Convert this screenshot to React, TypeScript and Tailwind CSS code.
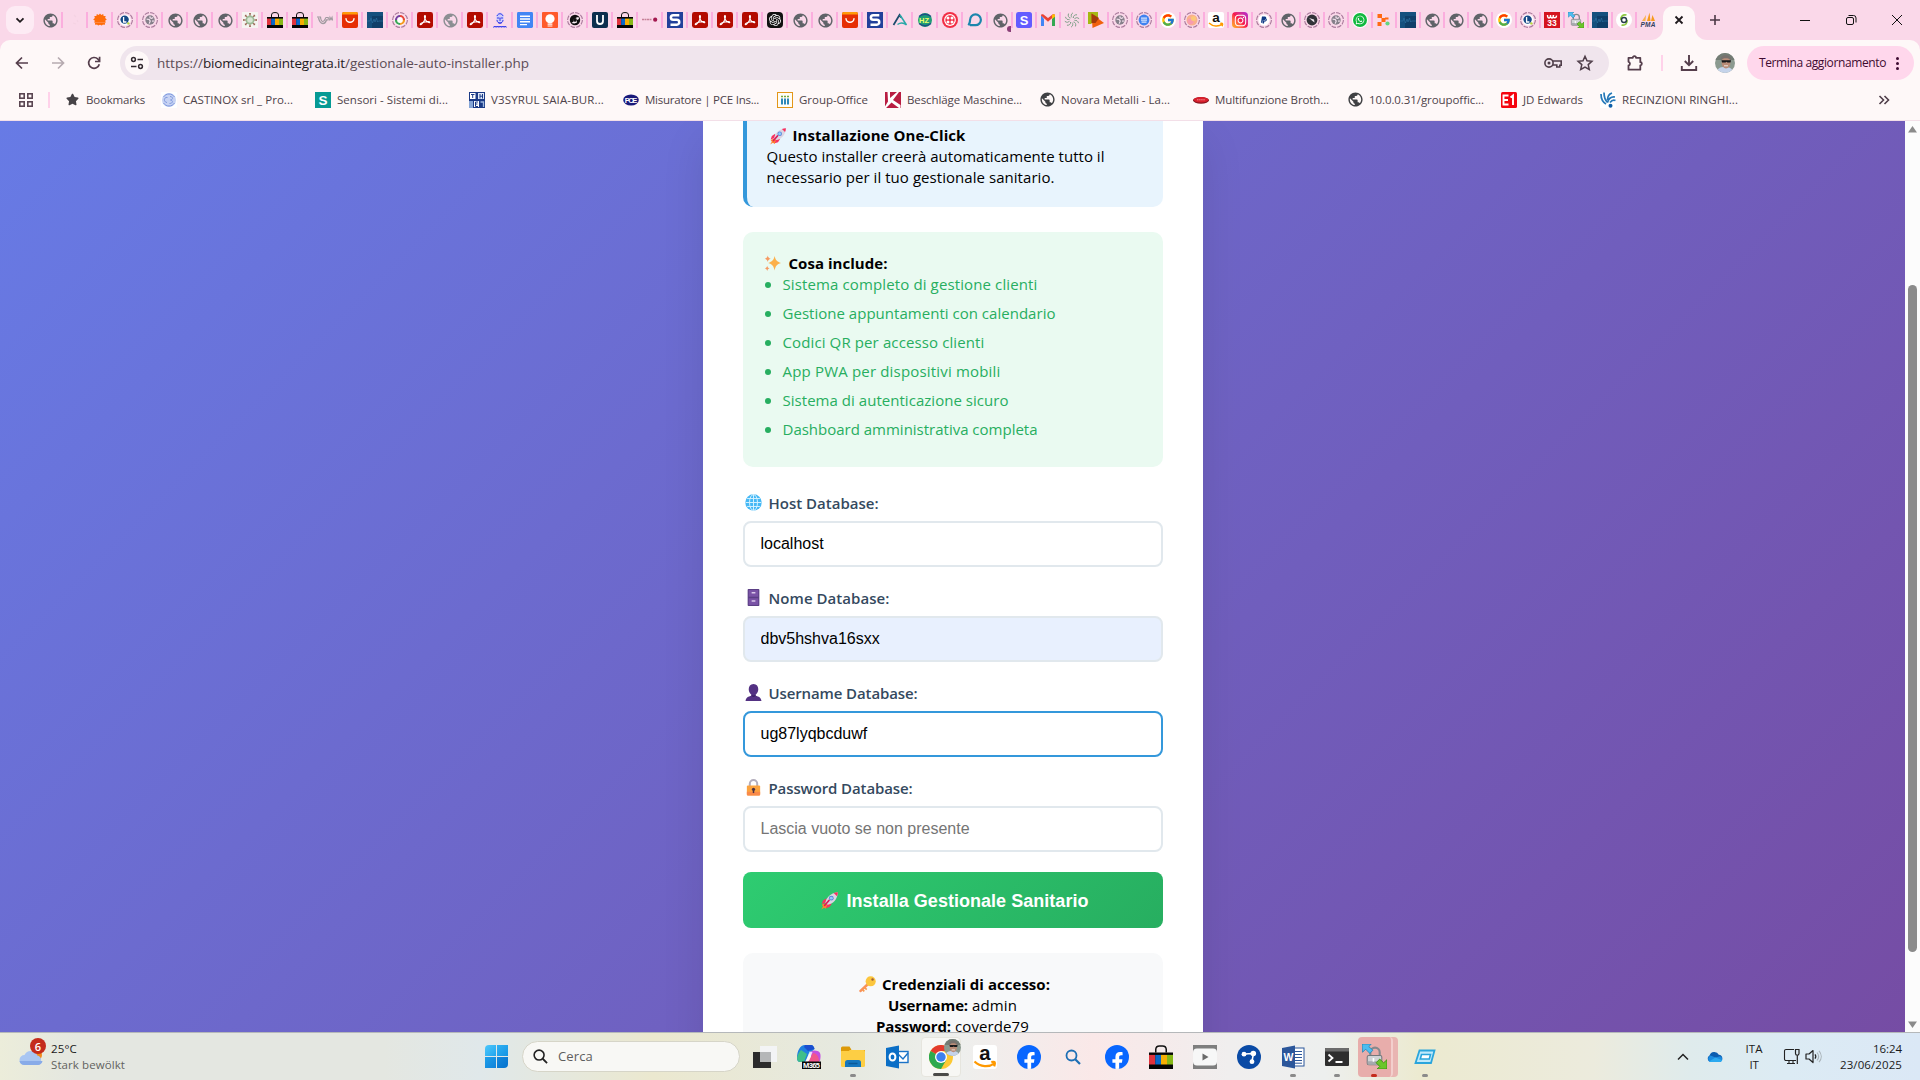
import React, { useLayoutEffect, useRef, useState } from "react";
import { MdPublic } from "react-icons/md";
import { FaInstagram, FaWhatsapp, FaPaypal, FaFacebookF, FaStar } from "react-icons/fa";
import { FcGoogle } from "react-icons/fc";
import { SiOpenai } from "react-icons/si";

/* Text run whose tracking is adjusted so that it spans exactly w pixels. */
function Fit({ w, className = "", children }: { w: number; className?: string; children: string }) {
  const ref = useRef<HTMLSpanElement>(null);
  const [ls, setLs] = useState(0);
  useLayoutEffect(() => {
    if (ref.current) {
      const natural = ref.current.getBoundingClientRect().width;
      setLs((w - natural) / children.length);
    }
  }, [w, children]);
  return (
    <span ref={ref} className={"inline-block whitespace-pre " + className} style={{ letterSpacing: ls }}>
      {children}
    </span>
  );
}

type SvgProps = { size?: number; box?: string; className?: string; children: React.ReactNode };
function S({ size = 16, box = "0 0 16 16", className = "", children }: SvgProps) {
  return (
    <svg width={size} height={size} viewBox={box} fill="none" className={"block shrink-0 " + className}>
      {children}
    </svg>
  );
}

const L = "Liberation Sans, sans-serif";

const Globe = ({ c = "#5f6368" }: { c?: string }) => (
  <MdPublic className="block shrink-0" size={17} color={c} />
);

function Dashed({ children }: { children: React.ReactNode }) {
  return (
    <S>
      <circle cx="8" cy="8" r="7.4" stroke="#a9799b" strokeWidth="1.1" strokeDasharray="4.6 1.2" />
      {children}
    </S>
  );
}
const DashGlobe = () => (
  <Dashed>
    <circle cx="8" cy="8" r="4.7" fill="#85808a" />
    <path d="M4.6 7.2l2.6.3 1 1.6-1 2.5M8 4.2v1.6l1.6.6 1.6-.9M12 9l-2 .2" stroke="#f3e2ee" strokeWidth="1.2" />
  </Dashed>
);
const LIcon = () => (
  <Dashed>
    <circle cx="8" cy="8" r="5.6" fill="#fff" />
    <circle cx="7.6" cy="7.6" r="4.2" fill="#164a87" />
    <path d="M6.6 5v5h2.8" stroke="#fff" strokeWidth="1.3" />
    <circle cx="11.4" cy="11.4" r="1.2" fill="#b6d53a" />
  </Dashed>
);
const Bag = ({ size = 16 }: { size?: number }) => (
  <S size={size}>
    <path d="M4.5 5V3A2.5 2.5 0 0 1 7 .6h2A2.500 2.500 0 0 1 11.500 3v2" stroke="#111" strokeWidth="1" />
    <rect x="0" y="5" width="16" height="11" fill="#050505" />
    <rect x="0" y="6.600" width="4.200" height="6.400" fill="#e0323c" />
    <rect x="4.200" y="6.600" width="3.800" height="6.400" fill="#0968c9" />
    <rect x="8" y="6.600" width="4" height="6.400" fill="#f6af04" />
    <rect x="12" y="6.600" width="4" height="6.400" fill="#86b817" />
  </S>
);
const Ali = () => (
  <S>
    <rect width="16" height="16" rx="2" fill="#e62e04" />
    <path d="M0 2.6V2a2 2 0 0 1 2-2h12a2 2 0 0 1 2 2v.6z" fill="#ff9a0a" />
    <path d="M4 6.600a4 3.600 0 0 0 8 0" stroke="#fff" strokeWidth="1.400" strokeLinecap="round" />
  </S>
);
const Wave = () => (
  <S>
    <rect width="16" height="16" fill="#15507e" />
    <rect x="5" y="4" width="11" height="12" fill="#0f3f69" />
    <path d="M0 9h3l1-3 1.500 5L7 7l1 3 1.500-4 1 4 1-1h4.500" stroke="#2b6f9f" strokeWidth=".7" />
  </S>
);
const Acro = () => (
  <S>
    <rect width="16" height="16" rx="2.400" fill="#b30b00" />
    <path
      d="M3.200 12.200c0-1.600 9.400-3.600 9.600-2 .1 1.300-3.800-.2-5-3.700C7.300 4.800 7.300 3.500 8 3.500c1.100 0 .3 5.500-3.300 8.700-.8.700-1.500.6-1.500 0z"
      stroke="#fff"
      strokeWidth="1.100"
      strokeLinejoin="round"
    />
  </S>
);
const Docs = () => (
  <S>
    <rect width="16" height="16" rx="1.400" fill="#4285f4" />
    <path d="M3 4.200h10M3 7h10M3 9.800h10M3 12.600h7" stroke="#fff" strokeWidth="1.400" />
  </S>
);
const SBlue = () => (
  <S>
    <rect width="16" height="16" fill="#22409a" />
    <path d="M12.300 3.200H6.200a2.100 2.100 0 0 0 0 4.600h3.600a2.400 2.400 0 0 1 0 4.900H3.500" stroke="#fff" strokeWidth="2.500" />
  </S>
);
const Amazon = ({ size = 16 }: { size?: number }) => (
  <S size={size}>
    <rect width="16" height="16" rx="2" fill="#fff" />
    <text x="8" y="10.300" textAnchor="middle" fontFamily={L} fontWeight="700" fontSize="13.500" fill="#111">
      a
    </text>
    <path d="M1 11c4 3.800 9.600 3.900 13.400 1.200M12.200 11.400c2.600-.6 2.900.1 1.900 2.900" stroke="#ff9900" strokeWidth="1.500" />
  </S>
);
const Arrows = ({ size = 16 }: { size?: number }) => (
  <S size={size} box="0 0 24 24">
    <path d="M8 12V8a4.500 4.500 0 0 1 9 0v4" stroke="#85898d" strokeWidth="2" />
    <rect x="5" y="11" width="14" height="9" rx="1.500" fill="#d0d3d6" stroke="#74787c" />
    <path d="M5.500 16.500h13V19a1 1 0 0 1-1 1h-11a1 1 0 0 1-1-1z" fill="#a6aaae" />
    <path d="M11 13.500v3.500" stroke="#fff" strokeWidth="1.600" />
    <path d="M0 0h9L6.500 2.500l4 3.500-3 3-4-4L.500 8z" fill="#4dbdf0" stroke="#1c7fae" strokeWidth=".7" />
    <path d="M24 24h-9.500l2.500-2.500-3.500-3.500 3.500-3.500 3.800 3.500L24 15z" fill="#6cc62b" stroke="#3c8a12" strokeWidth=".8" />
  </S>
);
const Google = () => (
  <span className="flex size-4 items-center justify-center rounded-full bg-white">
    <FcGoogle size={14} />
  </span>
);
const spokes = [0, 45, 90, 135, 180, 225, 270, 315];

const tabs25: React.ReactNode[] = [
  <Globe />,
  <S>
    <path d="M7 3l2 2M6 11l3 1M10 8l1 2" stroke="#f4d3e3" strokeWidth="1.200" />
  </S>,
  <S>
    <path d="M8 1.500l1.300 1.500 1.900-1 .4 2 2.100.1-.6 2 1.700 1.400-1.700 1.200.8 1.900H2.100l.8-1.900L1.200 7.500l1.700-1.400-.6-2 2.100-.1.4-2 1.900 1z" fill="#ff6d0a" />
    <path d="M2.800 10.600h10.400l-.6 2.400-1.600-.5-1.200 1-1.800-.8-1.800.8-1.200-1-1.600.5z" fill="#ff6d0a" />
  </S>,
  <LIcon />,
  <DashGlobe />,
  <Globe />,
  <Globe />,
  <Globe />,
  <S>
    <rect width="16" height="16" fill="#f6f4f1" />
    {spokes.map((a) => (
      <path key={a} d="M8 8V1.200M7 1.800h2" stroke="#98614e" strokeWidth="1" transform={`rotate(${a} 8 8)`} />
    ))}
    <circle cx="8" cy="8" r="4.500" fill="#9dbb96" />
    <circle cx="8" cy="8" r="2.800" fill="#d8e6d4" />
  </S>,
  <Bag />,
  <Bag />,
  <S>
    <path d="M0 5h3.500c.3 3 1 4.500 2.500 4.500S8 7 9 5.500h2.500M9 8h2l.5-2.500M12.500 8.500l.5-3 1 2 1-2 .5 3" stroke="#a09aa0" strokeWidth="1.200" />
    <path d="M1.500 5.500c.5 3 2 6 4.500 6s3-2 3.500-4" stroke="#a09aa0" strokeWidth="1.400" />
  </S>,
  <Ali />,
  <Wave />,
  <Dashed>
    <circle cx="8" cy="8" r="5.600" fill="#fff" />
    <path d="M8 4a4 4 0 0 1 4 4" stroke="#e8453c" strokeWidth="2.200" />
    <path d="M12 8a4 4 0 0 1-4 4" stroke="#f59a23" strokeWidth="2.200" />
    <path d="M8 12a4 4 0 0 1-4-4" stroke="#3aa757" strokeWidth="2.200" />
    <path d="M4 8a4 4 0 0 1 4-4" stroke="#7a3fa0" strokeWidth="2.200" />
  </Dashed>,
  <Acro />,
  <Globe c="#8b8e92" />,
  <Acro />,
  <S>
    <ellipse cx="8" cy="6" rx="4" ry="5.500" fill="#cfcdfa" />
    <path d="M5 4c1-3 5-3 6 0M5 6h2.500M8.500 6H11M8 6v3M6 10.500c1.500 1 2.500 1 4 0M5 8c0 4 6 4 6 0M2 14.500h12" stroke="#3437e8" strokeWidth="1" />
    <path d="M1 15.200h14" stroke="#6a6bf0" strokeWidth="1.200" strokeDasharray="1 .6" />
  </S>,
  <Docs />,
  <S>
    <rect width="16" height="16" rx="1" fill="#ff5a2b" />
    <circle cx="8" cy="6.800" r="4.600" fill="#fff" />
    <path d="M5.600 12.200h4.800M5.600 14h4.800" stroke="#fff" strokeWidth="1.200" />
  </S>,
  <Dashed>
    <circle cx="8" cy="8" r="5.200" fill="#0e0e0e" />
    <path d="M4.500 11l2-1.500V7.500l3-2 2-.5.5 2-2 1v2.500l-2.500 1z" fill="#f6ecf2" />
    <circle cx="8" cy="7.900" r="1.900" fill="#111" />
  </Dashed>,
  <S>
    <rect width="16" height="16" rx="2" fill="#0d2f4e" />
    <path d="M5 3v6a3 3 0 0 0 6 0V3" stroke="#fff" strokeWidth="1.800" />
  </S>,
  <Bag />,
  <S>
    <path d="M0 7.500h10" stroke="#c78199" strokeWidth="1.400" strokeDasharray="2 .5" />
    <circle cx="13.200" cy="7.700" r="2.100" fill="#a3194f" />
  </S>,
  <SBlue />,
  <Acro />,
  <Acro />,
  <Acro />,
  <span className="flex size-4 items-center justify-center rounded-sm bg-[#111]">
    <SiOpenai size={12} color="#fff" />
  </span>,
  <Globe />,
  <Globe />,
  <Ali />,
  <SBlue />,
  <S>
    <path d="M1.500 13L7.500 3l1.500 2.500" stroke="#1b4a6b" strokeWidth="1.700" />
    <path d="M8 3l6.500 10c-3-2.500-6-2.500-9-.5" stroke="#2aa8a8" strokeWidth="1.500" />
  </S>,
  <S>
    <circle cx="8" cy="8" r="7" fill="#1f9d76" />
    <path d="M2 4.500c4-3 8-3 12 0M2 11.500c4 3 8 3 12 0" stroke="#1d4f86" strokeWidth="1.300" />
    <text x="7" y="10.800" textAnchor="middle" fontFamily={L} fontWeight="700" fontSize="7.500" fill="#eaff6a">
      HZ
    </text>
  </S>,
  <S>
    <circle cx="8" cy="8" r="8" fill="#f22f46" />
    <circle cx="8" cy="8" r="5.900" fill="#fff" />
    <circle cx="8" cy="8" r="4.700" fill="#f22f46" />
    {[6, 10].map((x) => [6, 10].map((y) => <circle key={`${x}-${y}`} cx={x} cy={y} r="1.500" fill="#fff" />))}
  </S>,
  <S>
    <path d="M3 13.200h5.500a5.400 5.400 0 1 0-5.400-5.400c0 2.400-.6 4-1.600 5.600" stroke="#1c86ad" strokeWidth="2.200" />
  </S>,
  <span className="relative block">
    <Globe />
    <span className="absolute -bottom-[3px] -right-0.5 h-1.5 w-1 rounded-l-full bg-[#8a3f78]" />
  </span>,
];

const tabs24: React.ReactNode[] = [
  <S>
    <rect width="16" height="16" rx="2.500" fill="#635bff" />
    <text x="8" y="12.600" textAnchor="middle" fontFamily={L} fontWeight="700" fontSize="13" fill="#fff">
      S
    </text>
  </S>,
  <S>
    <path d="M1 3v11h3V7z" fill="#4285f4" />
    <path d="M15 3v11h-3V7z" fill="#34a853" />
    <path d="M1 3.500C1 2 2.500 1.800 3.500 2.600L8 6l4.500-3.400C13.500 1.800 15 2 15 3.500L8 9.800z" fill="#ea4335" />
    <path d="M12 3v4l3-2.300V3.300C15 2 13.300 1.800 12 3z" fill="#fbbc04" />
  </S>,
  <S>
    {[0, 36, 72, 108, 144, 180, 216, 252, 288, 324].map((a) => (
      <path key={a} d="M8 5.500C6.500 4 7 2 9 .8" stroke="#7c9f86" strokeWidth=".9" transform={`rotate(${a} 8 8)`} />
    ))}
  </S>,
  <S>
    <path d="M0 0h10v6L3 12H0z" fill="#a6b812" />
    <path d="M3.500 1.500L16 11 4.500 16z" fill="#f0600c" />
    <path d="M3.500 1.500L11 6l-3.500 5-4 0z" fill="#a33b09" />
  </S>,
  <DashGlobe />,
  <Dashed>
    <circle cx="8" cy="8" r="5.400" fill="#3f82f0" />
    <path d="M5 6.100h6M5 8.100h6M5.500 10.100h5" stroke="#fff" strokeWidth="1" />
  </Dashed>,
  <Google />,
  <Dashed>
    <circle cx="8" cy="8" r="5.500" fill="#f9b08c" />
    <circle cx="6.500" cy="9.500" r="3" fill="#f79bb0" />
    <circle cx="9.500" cy="6.500" r="2.500" fill="#fbc878" />
  </Dashed>,
  <Amazon />,
  <span className="flex size-4 items-center justify-center rounded-sm bg-linear-to-tr from-[#ffb300] via-[#f8144c] to-[#b10fd8]">
    <FaInstagram size={13} color="#fff" />
  </span>,
  <span className="relative block">
    <Dashed>
      <circle cx="8" cy="8" r="5.600" fill="#fff" />
    </Dashed>
    <FaPaypal className="absolute left-1 top-1" size={8} color="#103a86" />
  </span>,
  <Globe />,
  <Dashed>
    <circle cx="8" cy="8" r="5.400" fill="#303338" />
    <path d="M5 6l5 1.500.5 3L8.500 9z" fill="#e9e4ea" />
  </Dashed>,
  <DashGlobe />,
  <span className="flex size-4 items-center justify-center rounded-full bg-white">
    <span className="flex size-3.5 items-center justify-center rounded-full bg-[#12b83f]">
      <FaWhatsapp size={10} color="#fff" />
    </span>
  </span>,
  <S>
    <rect x="1.500" y="2" width="4.500" height="4" fill="#ff6a13" />
    <rect x="5.500" y="6" width="4" height="4" fill="#ff6a13" />
    <rect x="1.500" y="10" width="4" height="4" fill="#ff6a13" />
    <rect x="9" y="5.500" width="3.500" height="2" fill="#ff6a13" />
    <circle cx="11.500" cy="11.500" r="2.100" fill="#63d67e" />
  </S>,
  <Wave />,
  <Globe />,
  <Globe />,
  <Globe />,
  <Google />,
  <LIcon />,
  <S>
    <rect width="16" height="16" fill="#d5131f" />
    <path d="M3.500 3c0 4 3 4 3 0 0 4 3 4 3 0M9 3.500c0 3 3.500 3 3.500 0" stroke="#fff" strokeWidth="1.400" />
    <text x="8" y="14.200" textAnchor="middle" fontFamily={L} fontWeight="700" fontSize="8.500" fill="#fff">
      33
    </text>
  </S>,
  <Arrows />,
  <Wave />,
  <S>
    <circle cx="8" cy="8" r="8" fill="#fff" />
    <path d="M10.500 3C6.500 2 4.500 5 5 8M5.500 13c4 1 6-2 5.500-5" stroke="#8cc63f" strokeWidth="1.800" />
    <circle cx="8" cy="8" r="2.500" stroke="#273d4a" strokeWidth="1.400" />
  </S>,
  <S>
    <path d="M7 9L9.500.5 10.500 9z" fill="#f79a1c" />
    <path d="M11 9L12.500 3l2.500 6z" fill="#f79a1c" />
    <path d="M2 9l4-6-.5 6z" fill="#fab04e" />
    <text x="8" y="15.400" textAnchor="middle" textLength="15" fontFamily={L} fontWeight="700" fontStyle="italic" fontSize="6.500" fill="#33415f">
      PMA
    </text>
  </S>,
];

type Bm = { icon: React.ReactNode; text: string; tw: number; w: string };
const bookmarks: Bm[] = [
  { icon: <FaStar size={13} color="#474347" />, text: "Bookmarks", tw: 59, w: "w-[97px]" },
  {
    icon: (
      <S>
        <rect width="16" height="16" fill="#fff" />
        <circle cx="8" cy="8" r="7" fill="#c6d2f3" />
        <path d="M6.500 5.500C3 4.500 2 10 6 10.500M9 4.500c3 0 3.500 3 .5 3.500 3 .5 2.500 3.500-1 3.500M2.500 5C5 1 11 1 13.500 5M2.500 11c2.500 4 8.500 4 11 0" stroke="#7f99de" strokeWidth="1" />
      </S>
    ),
    text: "CASTINOX srl _ Pro...", tw: 110, w: "w-[154px]",
  },
  {
    icon: (
      <S>
        <rect width="16" height="16" fill="#069a94" />
        <text x="8" y="12.800" textAnchor="middle" fontFamily={L} fontWeight="700" fontSize="13.500" fill="#fff">S</text>
      </S>
    ),
    text: "Sensori - Sistemi di...", tw: 111, w: "w-[154px]",
  },
  {
    icon: (
      <S>
        <rect width="16" height="16" fill="#1b3a86" />
        <rect x="1" y="1" width="5.500" height="6" fill="#fff" />
        <rect x="9" y="1" width="6" height="6" fill="#dfe8f8" />
        <rect x="5" y="9" width="5" height="6" fill="#fff" />
        <rect x="0" y="9" width="4" height="7" fill="#86a5d6" />
        <path d="M2 2.500h3.500M3.700 2.500V6M11 2v4.500M13.500 2v4.500M11 4.200h2.500M6.500 10v4.500h2.500M6.500 12h2M6.500 10h2.500" stroke="#1b3a86" strokeWidth="1" />
        <path d="M11.500 10h3v5" stroke="#9fb8e0" strokeWidth="1.300" />
      </S>
    ),
    text: "V3SYRUL SAIA-BUR...", tw: 113, w: "w-[154px]",
  },
  {
    icon: (
      <S>
        <ellipse cx="8" cy="8" rx="7.800" ry="5.600" fill="#19197a" />
        <text x="8" y="10.700" textAnchor="middle" textLength="12.500" fontFamily={L} fontWeight="700" fontSize="7.500" fill="#fff">PCE</text>
      </S>
    ),
    text: "Misuratore | PCE Ins...", tw: 114, w: "w-[154px]",
  },
  {
    icon: (
      <S>
        <rect x=".5" y=".5" width="15" height="15" fill="#fffdf6" stroke="#e39618" />
        <path d="M5 6.500v6M8 6.500v6M11 6.500v6" stroke="#2683b5" strokeWidth="1.900" />
        <path d="M4 4.500h2M7 4.500h2M10 4.500h2" stroke="#76a63c" strokeWidth="1.400" />
      </S>
    ),
    text: "Group-Office", tw: 69, w: "w-[108px]",
  },
  {
    icon: (
      <S>
        <rect width="16" height="16" fill="#b91d42" />
        <path d="M2.500 0H5v6L12 0h2L8 8l7.500 5v3h-1.500L6.500 10.500 1 16H0v-1.500l3-5z" fill="#fff" />
      </S>
    ),
    text: "Beschläge Maschine...", tw: 115, w: "w-[154px]",
  },
  { icon: <Globe c="#3f4043" />, text: "Novara Metalli - La...", tw: 109, w: "w-[154px]" },
  {
    icon: (
      <S>
        <ellipse cx="8" cy="8.300" rx="8" ry="3.400" fill="#8b1620" />
        <ellipse cx="8" cy="7.800" rx="7.300" ry="2.700" fill="#d91f2c" />
        <path d="M4 7.800h8" stroke="#f08b90" strokeWidth="1" strokeDasharray="1.500 .6" />
      </S>
    ),
    text: "Multifunzione Broth...", tw: 114, w: "w-[154px]",
  },
  { icon: <Globe c="#3f4043" />, text: "10.0.0.31/groupoffic...", tw: 115, w: "w-[154px]" },
  {
    icon: (
      <S>
        <rect width="16" height="16" rx="1.500" fill="#f5050f" />
        <path d="M7.500 3.500h-5v9h5M2.500 8h4.500M9.500 5.500l2.500-2v9.500" stroke="#fff" strokeWidth="1.900" />
      </S>
    ),
    text: "JD Edwards", tw: 60, w: "w-[99px]",
  },
  {
    icon: (
      <S>
        <rect width="16" height="16" fill="#fff" />
        <path d="M1 2c0 5 1.500 8 5 10M4 .5c0 5 1 7.500 3.500 10M15 5c-4-.5-6.500 2-7.500 5.500M12 1C9 2 7.500 4.500 7.500 8M15.500 8.500c-2-1-4 0-5.500 2" stroke="#2678b8" strokeWidth="1.700" />
        <circle cx="10.500" cy="13.800" r="2" fill="#0e5ea8" />
      </S>
    ),
    text: "RECINZIONI RINGHI...", tw: 116, w: "w-[160px]",
  },
];

function Avatar({ size }: { size: number }) {
  return (
    <S size={size} box="0 0 20 20" className="rounded-full">
      <rect width="20" height="20" fill="#8b9a90" />
      <path d="M0 0h20v7H0z" fill="#737c74" />
      <path d="M2 20c0-5 3-6 8-6s8 2 8 6z" fill="#c5d3ea" />
      <ellipse cx="11" cy="9.500" rx="4.400" ry="6" fill="#b98c77" />
      <path d="M5.500 7C5 .5 16.500.5 16 7c-2-2.500-8-2.500-10.500 0z" fill="#77716d" />
      <path d="M6.500 7.200h9.500l-.5 2.300h-3l-1-.8-1 .8H7z" fill="#191a1d" />
      <path d="M9 12.800h4" stroke="#f0e5e0" />
    </S>
  );
}

/* Emoji-style pictures used next to headings and labels */
const Rocket = ({ size = 18 }: { size?: number }) => (
  <S size={size} box="0 0 32 32">
    <path d="M3 23l7-3 3 3-3 7-3-2-5 3 3-5z" fill="#ff822d" />
    <path d="M11 12l-6 4-2 6 8-3zM20 21l-4 6-6 2 3-8z" fill="#f8315f" />
    <path d="M9 20C10 12 17 3 30 2c0 12-9 20-17 21z" fill="#dcd5e2" />
    <path d="M23 3.500c2.300-1 4.500-1.500 7-1.500 0 2.500-.5 5-1.500 7z" fill="#f92f60" />
    <circle cx="19" cy="12" r="4" fill="#5a83dc" />
    <circle cx="19" cy="12" r="2.500" fill="#8fd0fb" />
    <path d="M8 24l7-8" stroke="#d81b5c" strokeWidth="3" strokeLinecap="round" />
  </S>
);
const Sparkles = () => (
  <S size={17} box="0 0 32 32">
    <path d="M20 2c2 8 4 10.500 12 13-8 2.500-10 5-12 14-2-9-4.500-11.500-12-14 7.500-2.500 10-5 12-13z" fill="#fcb04a" />
    <path d="M7 1c.8 3.500 2 4.700 5.500 6C9 8.200 7.800 9.500 7 13c-.8-3.500-2-4.800-5.500-6C5 5.700 6.200 4.500 7 1zM6 20c.7 3 1.800 4.200 4.500 5-2.700.9-3.800 2-4.500 5-.7-3-1.800-4.100-4.500-5 2.700-.8 3.800-2 4.500-5z" fill="#f69a62" />
  </S>
);
const World = () => (
  <S size={17} box="0 0 32 32">
    <circle cx="16" cy="16" r="15.500" fill="#45b8f5" />
    <path d="M1 16h30M16 1v30M4 8.500h24M4 23.500h24" stroke="#d7f2ff" strokeWidth="1.800" />
    <ellipse cx="16" cy="16" rx="7.500" ry="15" stroke="#d7f2ff" strokeWidth="1.800" />
  </S>
);
const Cabinet = () => (
  <S size={17} box="0 0 32 32">
    <rect x="5" y="0" width="22" height="32" rx="1.500" fill="#5b3f85" />
    <rect x="7" y="2" width="18" height="12.500" fill="#7a53a6" />
    <rect x="7" y="17.500" width="18" height="12.500" fill="#7a53a6" />
    <path d="M12.500 7h7M12.500 22.500h7" stroke="#d9c8ea" strokeWidth="3" />
  </S>
);
const Person = () => (
  <S size={17} box="0 0 32 32">
    <path d="M16 0c6 0 9 4 9 10 0 5-2.500 8.500-5 10v2c6 1.500 10 3 11 10H1c1-7 5-8.500 11-10v-2c-2.500-1.500-5-5-5-10 0-6 3-10 9-10z" fill="#533183" />
    <path d="M12 20v2c3 3 5 3 8 0v-2c-3 2-5 2-8 0z" fill="#3c2168" />
  </S>
);
const Lock = () => (
  <S size={17} box="0 0 32 32">
    <path d="M9 14V9a7 7 0 0 1 14 0v5" stroke="#b3aebd" strokeWidth="3.800" />
    <rect x="3.500" y="12" width="25" height="19" rx="2" fill="#fba33f" />
    <path d="M3.500 24h25v5a2 2 0 0 1-2 2h-21a2 2 0 0 1-2-2z" fill="#f98a49" />
    <circle cx="16" cy="19.500" r="3" fill="#4b3142" />
    <path d="M16 20v6.500" stroke="#4b3142" strokeWidth="2.800" />
  </S>
);
const KeyPic = () => (
  <S size={17} box="0 0 32 32">
    <path d="M3 28L18 14" stroke="#f9925a" strokeWidth="5" strokeLinecap="round" />
    <path d="M7 26l3 3M11 22l3.500 3.500" stroke="#f99a4c" strokeWidth="3.200" />
    <circle cx="22" cy="10" r="9.500" fill="#fcc63d" />
    <circle cx="25.500" cy="6.500" r="2.300" fill="#a0603a" />
  </S>
);

function TabStrip() {
  return (
    <div className="flex h-10 w-full bg-[#fad8e9]">
      <div className="flex w-[38px] items-center pl-1.5">
        <div className="flex h-7 w-7 items-center justify-center rounded-[9px] bg-[#fdebf4]">
          <S size={12} box="0 0 12 12">
            <path d="M2.500 4.300L6 7.800l3.500-3.500" stroke="#1f1a1d" strokeWidth="1.800" />
          </S>
        </div>
      </div>
      {tabs25.map((t, i) => (
        <div key={i} className="flex w-[25px] shrink-0 items-center pl-1">
          <div className="flex size-4 items-center justify-center">{t}</div>
          <div className="ml-[3px] h-4 w-0.5 bg-[#fbaede]" />
        </div>
      ))}
      {tabs24.map((t, i) => (
        <div key={i} className="flex w-6 shrink-0 items-center pl-[3px]">
          <div className="flex size-4 items-center justify-center">{t}</div>
          {i < tabs24.length - 1 && <div className="ml-[3px] h-4 w-0.5 bg-[#fbaede]" />}
        </div>
      ))}
      <div className="-ml-2.5 flex items-end">
        <div className="h-3 w-3 bg-[#fef8f8]">
          <div className="h-3 w-3 rounded-br-xl bg-[#fad8e9]" />
        </div>
        <div className="flex h-[34px] w-8 items-center justify-center rounded-t-[10px] bg-[#fef8f8] pb-1.5">
          <S size={10} box="0 0 10 10">
            <path d="M1.500 1.500l7 7M8.500 1.500l-7 7" stroke="#1f1a1d" strokeWidth="1.800" />
          </S>
        </div>
        <div className="h-3 w-3 bg-[#fef8f8]">
          <div className="h-3 w-3 rounded-bl-xl bg-[#fad8e9]" />
        </div>
      </div>
      <div className="flex w-4 items-center justify-center">
        <S size={12} box="0 0 12 12">
          <path d="M6 1v10M1 6h10" stroke="#4b3745" strokeWidth="1.600" />
        </S>
      </div>
      <div className="ml-auto flex items-center">
        <div className="flex w-[46px] justify-center">
          <div className="h-px w-2.5 bg-[#111]" />
        </div>
        <div className="flex w-[46px] justify-center">
          <S size={12} box="0 0 12 12">
            <rect x="1.500" y="3.500" width="7" height="7" rx="1.500" stroke="#111" />
            <path d="M3.500 1.500h5a2.500 2.500 0 0 1 2.500 2.500v4.500" stroke="#111" />
          </S>
        </div>
        <div className="flex w-[46px] justify-center">
          <S size={12} box="0 0 12 12">
            <path d="M1 1l10 10M11 1L1 11" stroke="#111" />
          </S>
        </div>
      </div>
    </div>
  );
}

function Toolbar() {
  return (
    <div className="h-12 bg-[#fad8e9]">
      <div className="flex h-12 items-center rounded-t-[10px] bg-[#fef8f8] pb-0.5">
        <div className="flex w-[120px] items-center">
          <S size={14} box="0 0 14 14" className="ml-[15px]">
            <path d="M13 7H2M7 1.500L1.500 7 7 12.500" stroke="#553e4c" strokeWidth="1.700" />
          </S>
          <S size={14} box="0 0 14 14" className="ml-[22px]">
            <path d="M1 7h11M7 1.500L12.500 7 7 12.500" stroke="#b6aab0" strokeWidth="1.700" />
          </S>
          <S size={14} box="0 0 14 14" className="ml-[22px]">
            <path d="M12.300 8.200A5.400 5.400 0 1 1 11 3.200L12.500 5" stroke="#553e4c" strokeWidth="1.700" />
            <path d="M12.600.8v4.700H8" stroke="#553e4c" strokeWidth="1.700" />
          </S>
        </div>
        <div className="flex h-[34px] w-[1489px] items-center rounded-full bg-[#f0e5ed] pl-[5px] text-[13.5px]">
          <div className="flex size-6 items-center justify-center rounded-full bg-[#fef8f8]">
            <S size={14} box="0 0 14 14">
              <circle cx="3.500" cy="3.500" r="1.900" stroke="#332a30" strokeWidth="1.500" />
              <path d="M7.500 3.500H13M1 10.500h5.500" stroke="#332a30" strokeWidth="1.600" />
              <circle cx="10.500" cy="10.500" r="1.900" stroke="#332a30" strokeWidth="1.500" />
            </S>
          </div>
          <div className="ml-2 flex text-[#5c4c56]">
            <Fit w={46}>https://</Fit>
            <Fit w={142} className="text-[#1f1a1d]">biomedicinaintegrata.it</Fit>
            <Fit w={184}>/gestionale-auto-installer.php</Fit>
          </div>
          <div className="ml-auto mr-[15px] flex items-center gap-3.5">
            <S size={18} box="0 0 18 18">
              <circle cx="5" cy="9" r="4.100" stroke="#4f3e49" strokeWidth="1.600" />
              <circle cx="5" cy="9" r="1.500" fill="#4f3e49" />
              <path d="M9 7h8.200v4.200h-1.400V13h-3v-2H9" stroke="#4f3e49" strokeWidth="1.600" />
            </S>
            <S size={18} box="0 0 18 18">
              <path d="M9 2.300l2 4.500 4.900.5-3.700 3.300 1.100 4.800L9 13l-4.300 2.400 1.100-4.800L2.100 7.300 7 6.800z" stroke="#4f3e49" strokeWidth="1.500" />
            </S>
          </div>
        </div>
        <S size={18} box="0 0 18 18" className="ml-[17px]">
          <path d="M2.500 3.800h4.300a1.600 1.600 0 0 1 3.200 0h4.300v4.400a1.500 1.500 0 0 1 0 3.100v4.400H2.500v-4.200a1.900 1.900 0 0 0 0-3.700z" stroke="#553e4c" strokeWidth="1.800" strokeLinejoin="round" />
        </S>
        <div className="ml-[17px] h-4 w-0.5 bg-[#ffd2ea]" />
        <S size={18} box="0 0 18 18" className="ml-[17px]">
          <path d="M9 1v10M4.800 7L9 11.200 13.200 7M1.800 12v4h14.400v-4" stroke="#553e4c" strokeWidth="1.900" />
        </S>
        <div className="ml-[17px]">
          <Avatar size={20} />
        </div>
        <div className="ml-3 flex h-[34px] w-[167px] items-center rounded-full bg-[#ffd7ec] pl-3 text-xs text-[#3e0b31]">
          <Fit w={127}>Termina aggiornamento</Fit>
          <div className="ml-2.5 flex flex-col gap-0.5">
            <div className="size-[3px] rounded-full bg-[#3e0b31]" />
            <div className="size-[3px] rounded-full bg-[#3e0b31]" />
            <div className="size-[3px] rounded-full bg-[#3e0b31]" />
          </div>
        </div>
      </div>
    </div>
  );
}

function BookmarkBar() {
  return (
    <div className="flex h-[33px] items-center border-b border-[#f3dfe8] bg-[#fef8f8] pb-[9px] text-[11.5px] text-[#4e434a]">
      <S size={14} box="0 0 14 14" className="ml-[19px]">
        {[0.8, 8.8].map((x) => [0.8, 8.8].map((y) => <rect key={`${x}-${y}`} x={x} y={y} width="4.400" height="4.400" stroke="#5a4652" strokeWidth="1.600" />))}
      </S>
      <div className="ml-[15px] mr-3.5 h-4 w-0.5 bg-[#ffd2ea]" />
      {bookmarks.map((b) => (
        <div key={b.text} className={"flex shrink-0 items-center gap-1.5 " + b.w}>
          <div className="flex size-4 items-center justify-center">{b.icon}</div>
          <Fit w={b.tw} className="leading-4">{b.text}</Fit>
        </div>
      ))}
      <S size={12} box="0 0 12 12" className="ml-[118px]">
        <path d="M1.500 2l4 4-4 4M6.500 2l4 4-4 4" stroke="#4f3e49" strokeWidth="1.600" />
      </S>
    </div>
  );
}

const features: [string, number][] = [
  ["Sistema completo di gestione clienti", 255],
  ["Gestione appuntamenti con calendario", 273],
  ["Codici QR per accesso clienti", 202],
  ["App PWA per dispositivi mobili", 218],
  ["Sistema di autenticazione sicuro", 226],
  ["Dashboard amministrativa completa", 255],
];

type FieldProps = { icon: React.ReactNode; label: string; lw: number; value?: string; placeholder?: string; look: string };
function Field({ icon, label, lw, value, placeholder, look }: FieldProps) {
  return (
    <div className="mb-5">
      <div className="mb-2 flex h-[21px] items-center pl-0.5 font-semibold text-[#34495e]">
        {icon}
        <Fit w={lw} className="ml-[7px] pt-0.5">{label}</Fit>
      </div>
      <input
        className={"block h-[46px] w-full rounded-lg border-2 px-4 font-['Liberation_Sans',sans-serif] text-base outline-none placeholder:text-[#757575] " + look}
        defaultValue={value}
        placeholder={placeholder}
      />
    </div>
  );
}

function Page() {
  return (
    <div className="flex h-[911px] overflow-hidden">
      <div className="flex w-[1905px] justify-center overflow-hidden bg-[linear-gradient(135deg,#667eea_0%,#764ba2_100%)] bg-[length:1905px_1206px] bg-[position:0_-205px]">
        <div className="h-[1000px] w-[500px] bg-white px-10 text-[15px] leading-[21px] text-black shadow-[0_20px_40px_rgba(0,0,0,0.1)]">
          <div className="mb-[25px] h-[86px] rounded-b-[10px] border-l-4 border-[#3498db] bg-[#e8f4fd] pl-5 pt-1">
            <div className="flex h-[21px] items-center pl-0.5 font-bold">
              <Rocket />
              <Fit w={173} className="ml-1.5">Installazione One-Click</Fit>
            </div>
            <div><Fit w={338}>Questo installer creerà automaticamente tutto il</Fit></div>
            <div><Fit w={288}>necessario per il tuo gestionale sanitario.</Fit></div>
          </div>
          <div className="mb-[25px] rounded-[10px] bg-[#eafaf1] pb-[19px] pl-5 pr-5 pt-[21px]">
            <div className="flex h-[21px] items-center pl-px font-bold">
              <Sparkles />
              <Fit w={99} className="ml-2">Cosa include:</Fit>
            </div>
            <ul>
              {features.map(([t, w]) => (
                <li key={t} className="mb-2 flex h-[21px] items-center pl-0.5 text-[#27ae60]">
                  <span className="mr-3 size-1.5 rounded-full bg-[#27ae60]" />
                  <Fit w={w}>{t}</Fit>
                </li>
              ))}
            </ul>
          </div>
          <Field icon={<World />} label="Host Database:" lw={110} value="localhost" look="border-[#e1e8ed] bg-white" />
          <Field icon={<Cabinet />} label="Nome Database:" lw={121} value="dbv5hshva16sxx" look="border-[#e1e8ed] bg-[#e8f0fe]" />
          <Field icon={<Person />} label="Username Database:" lw={149} value="ug87lyqbcduwf" look="border-[#3498db] bg-white" />
          <Field icon={<Lock />} label="Password Database:" lw={144} placeholder="Lascia vuoto se non presente" look="border-[#e1e8ed] bg-white" />
          <button className="mb-[25px] flex h-14 w-full items-center justify-center rounded-lg bg-[linear-gradient(135deg,#2ecc71,#27ae60)] pl-[3px] pt-px font-['Liberation_Sans',sans-serif] text-lg font-bold text-white">
            <Rocket size={19} />
            <Fit w={242} className="ml-2">Installa Gestionale Sanitario</Fit>
          </button>
          <div className="flex flex-col items-center rounded-[10px] bg-[#f8f9fa] pb-5 pt-[21px]">
            <div className="flex h-[21px] items-center pl-1 font-bold">
              <KeyPic />
              <Fit w={168} className="ml-1.5">Credenziali di accesso:</Fit>
            </div>
            <div>
              <Fit w={80} className="font-bold">Username:</Fit>
              <Fit w={45} className="ml-1">admin</Fit>
            </div>
            <div>
              <Fit w={75} className="font-bold">Password:</Fit>
              <Fit w={74} className="ml-1">coverde79</Fit>
            </div>
          </div>
        </div>
      </div>
      <div className="flex w-[15px] flex-col items-center bg-[#fcfcfc]">
        <S size={9} box="0 0 9 9" className="mt-1">
          <path d="M4.500 1L9 7.500H0z" fill="#8b8b8b" />
        </S>
        <div className="mt-[151px] h-[667px] w-[9px] rounded-full bg-[#8b8b8b]" />
        <S size={9} box="0 0 9 9" className="mb-[3px] mt-auto">
          <path d="M4.500 8L9 1.500H0z" fill="#8b8b8b" />
        </S>
      </div>
    </div>
  );
}

const Fb = () => (
  <span className="flex size-6 items-end justify-center overflow-hidden rounded-full bg-[#0866ff]">
    <FaFacebookF size={19} color="#fff" className="translate-y-0.5" />
  </span>
);

type TaskApp = { icon: React.ReactNode; dot?: string; cell?: string };
const apps: TaskApp[] = [
  {
    icon: (
      <S size={24} box="0 0 24 24">
        <rect x="7" y="1" width="17" height="16" fill="#f3f4f5" />
        <rect x="0" y="7" width="18" height="16" fill="#2c2c2c" />
        <rect x="7" y="7" width="11" height="10" fill="#b5b7b8" />
      </S>
    ),
  },
  {
    icon: (
      <S size={26} box="0 0 26 26">
        <path d="M1 14C1 7 4 1 9 1h6c2 0 3 2 3.500 4L13 10 9 18H4c-2 0-3-1.500-3-4z" fill="#1f7fe0" />
        <path d="M1 14c.5-3 2-6 4-8l6 4-3 8H4c-2 0-3-2-3-4z" fill="#3fbf8a" />
        <path d="M9 1h6c2 0 3 2 3.500 4L12 7 8 3z" fill="#1b4fd0" />
        <path d="M14 8c2-1.500 5-2 7.500-1C25 8 25 12 24 17h-8z" fill="#c44fe0" />
        <path d="M12 18l5-9c3 0 6 3 6 9z" fill="#f0568c" />
        <path d="M10 17l3.500-9.500 3 .5-3.500 9z" fill="#fff" fillOpacity=".75" />
        <rect x="6" y="17.500" width="19" height="7.500" fill="#060606" />
        <text x="15.500" y="24" textAnchor="middle" textLength="17" fontFamily={L} fontWeight="700" fontSize="7.500" fill="#fff">M365</text>
      </S>
    ),
  },
  {
    icon: (
      <S size={24} box="0 0 24 24">
        <path d="M0 3a1.500 1.500 0 0 1 1.500-1.500h7l2 3.500H24v6H0z" fill="#dd9a08" />
        <rect x="0" y="5" width="24" height="17" rx="1.500" fill="#fdce44" />
        <path d="M0 3.500h9.500L8 6H0z" fill="#dd9a08" />
        <path d="M4 22v-4.500A2.500 2.500 0 0 1 6.500 15h11a2.500 2.500 0 0 1 2.500 2.500V22z" fill="#1577bf" />
        <path d="M7.500 18.500h9" stroke="#0b5a99" strokeWidth="1.500" />
      </S>
    ),
    dot: "bg-[#8a8a8a]",
  },
  {
    icon: (
      <S size={24} box="0 0 24 24">
        <rect x="12" y="6.500" width="11" height="11" fill="#fff" stroke="#1a73c7" strokeWidth="1.400" />
        <path d="M13 9l5 5 5-6" stroke="#1a73c7" strokeWidth="1.400" />
        <path d="M1 3l13-2.500v23L1 21z" fill="#0b6fc6" />
        <ellipse cx="7.500" cy="12" rx="2.900" ry="3.600" stroke="#fff" strokeWidth="2" />
      </S>
    ),
  },
  {
    icon: (
      <span className="relative block">
        <S size={24} box="0 0 24 24">
          <circle cx="12" cy="12" r="12" fill="#fcc934" />
          <path d="M12 12L1.600 6A12 12 0 0 1 22.400 6H12z" fill="#e33b2e" />
          <path d="M12 12L1.600 6A12 12 0 0 0 12 24l5.200-9z" fill="#2da94f" />
          <circle cx="12" cy="12" r="6" fill="#fff" />
          <circle cx="12" cy="12" r="4.700" fill="#3d80ee" />
        </S>
        <span className="absolute -right-2 -top-1.5">
          <Avatar size={17} />
        </span>
      </span>
    ),
    dot: "chrome",
    cell: "bg-[#f7f7f4] border border-[#e6e5de]",
  },
  { icon: <Amazon size={24} /> },
  { icon: <Fb /> },
  {
    icon: (
      <S size={16}>
        <circle cx="6.500" cy="6.500" r="5" stroke="#1c6fb5" strokeWidth="1.800" />
        <path d="M10.200 10.200L15 15" stroke="#1c6fb5" strokeWidth="2.200" />
      </S>
    ),
  },
  { icon: <Fb /> },
  { icon: <Bag size={24} /> },
  {
    icon: (
      <S size={24} box="0 0 24 24">
        <rect width="24" height="24" fill="#7e7e7e" />
        <rect x="0" y="3.500" width="24" height="17" rx="4" fill="#f7f7f7" />
        <path d="M9.500 8.500l6 3.500-6 3.500z" fill="#6a6a6a" />
      </S>
    ),
  },
  {
    icon: (
      <S size={24} box="0 0 24 24">
        <circle cx="12" cy="12" r="12" fill="#0a4aa5" />
        <path d="M7.500 9l8.500-.5M16.500 8.500L15 16" stroke="#fff" strokeWidth="1.500" />
        <circle cx="7" cy="9.200" r="2.400" fill="#fff" />
        <circle cx="16.300" cy="8.500" r="2.800" fill="#fff" />
        <circle cx="15" cy="16.700" r="2.400" fill="#fff" />
      </S>
    ),
  },
  {
    icon: (
      <S size={24} box="0 0 24 24">
        <rect x="11" y="3" width="12" height="18" fill="#fff" stroke="#2b569a" />
        <path d="M14 6.500h7M14 9.500h7M14 12.500h7M14 15.500h7M14 18.200h7" stroke="#2b569a" />
        <path d="M1 3l13-2.500v23L1 21z" fill="#2b569a" />
        <text x="7.500" y="16" textAnchor="middle" fontFamily={L} fontWeight="700" fontSize="10.500" fill="#fff">W</text>
      </S>
    ),
    dot: "bg-[#8a8a8a]",
  },
  {
    icon: (
      <S size={24} box="0 0 24 24">
        <rect x="0" y="3" width="24" height="18" rx="1" fill="#2e2e2e" />
        <path d="M0 4a1 1 0 0 1 1-1h22a1 1 0 0 1 1 1v2.500H0z" fill="#6b6b6b" />
        <path d="M3.500 9.500L7.500 13l-4 3.500M10.500 17h7" stroke="#fff" strokeWidth="1.800" />
      </S>
    ),
    dot: "bg-[#8a8a8a]",
  },
  { icon: <Arrows size={25} />, dot: "bg-[#c42b1c]", cell: "-left-1.5 w-[35px] bg-[#e8adab] border-r-2 border-[#f3cfcd] shadow-[5px_0_0_#e9b5b2]" },
  {
    icon: (
      <S size={22} box="0 0 22 22">
        <path d="M5.500 4.500h15L17 17H1.500z" fill="#bfe9fb" stroke="#2aa5dc" strokeWidth="1.800" />
        <path d="M7.500 8.500h9l-1.200 4.500H6.300z" fill="#fff" stroke="#2aa5dc" strokeWidth="1.600" />
      </S>
    ),
    dot: "bg-[#8a8a8a]",
  },
];

function Taskbar() {
  return (
    <div className="flex h-12 border-t border-[#b5b8ba] bg-[linear-gradient(90deg,#ecedda_0%,#e4e7e1_4%,#e4e7e1_20%,#e0e8ea_25%,#ebe8cf_34%,#e6e9e0_44%,#eeefed_50%,#fae8e8_57%,#f0eeee_64%,#edefee_69%,#ecead0_74%,#ecebdd_83%,#dfebec_88%,#dcebf4_93%,#dbe8f6_100%)]">
      <div className="flex w-[484px] pl-[19px] pt-1.5 text-[11.5px]">
        <div className="relative h-9 w-6">
          <S size={24} box="0 0 24 24" className="mt-1.5">
            <circle cx="17" cy="10" r="6" fill="#f28a1c" />
            <path d="M5.500 20a5 5 0 0 1 0-10 7 7 0 0 1 12.800.5A5 5 0 0 1 19 20z" fill="#a9c6f2" />
            <path d="M5.500 20a5 5 0 0 1-5-4h23a5 5 0 0 1-4.500 4z" fill="#88abe8" />
          </S>
          <div className="absolute -top-px left-[11px] flex size-4 items-center justify-center rounded-full bg-[#c42b1c] text-[11px] font-semibold leading-none text-white">
            6
          </div>
        </div>
        <div className="ml-2 flex flex-col items-start pt-0.5 leading-4">
          <Fit w={26} className="text-[#1a1a1a]">25°C</Fit>
          <Fit w={74} className="text-[#62635f]">Stark bewölkt</Fit>
        </div>
      </div>
      <div className="flex items-center">
        <div className="ml-px grid size-[23px] grid-cols-2 gap-px">
          <div className="rounded-tl-sm bg-linear-to-br from-[#4cc7fb] to-[#1fa5ee]" />
          <div className="bg-linear-to-br from-[#2fb0f2] to-[#1494e4]" />
          <div className="bg-linear-to-br from-[#1fa0ea] to-[#0f82da]" />
          <div className="rounded-br-sm bg-linear-to-br from-[#1488dc] to-[#0572ce]" />
        </div>
        <div className="ml-3.5 flex h-[31px] w-[218px] items-center rounded-full border border-[#d6d5c8] bg-[#f8f8f5] pl-2.5 text-[13px] text-[#5e5e5e]">
          <S size={15}>
            <circle cx="6.500" cy="6.500" r="5.300" stroke="#222" strokeWidth="1.700" />
            <path d="M10.400 10.400L15 15" stroke="#222" strokeWidth="1.900" />
          </S>
          <Fit w={35} className="ml-2.5">Cerca</Fit>
        </div>
      </div>
      <div className="ml-[3px] flex items-center">
        {apps.map((a, i) => (
          <div key={i} className="flex w-11 justify-center">
            <div className={"relative flex h-10 items-center justify-center rounded " + (a.cell ?? "") + (a.cell?.includes("w-[35px]") ? "" : " w-10")}>
              {a.icon}
              {a.dot === "chrome" && <div className="absolute bottom-0 h-[3px] w-4 rounded-full bg-[#4a4a48]" />}
              {a.dot && a.dot !== "chrome" && <div className={"absolute bottom-0 h-[3px] w-1.5 rounded-full " + a.dot} />}
            </div>
          </div>
        ))}
      </div>
      <div className="ml-auto flex items-center pr-[18px] text-[11.5px] leading-4 text-[#1a1a1a]">
        <S size={12} box="0 0 12 12">
          <path d="M1 8.500l5-5 5 5" stroke="#222" strokeWidth="1.500" />
        </S>
        <S size={16} box="0 0 16 16" className="ml-[18px]">
          <path d="M3.500 13a3.500 3.500 0 0 1-1-6.500 5 5 0 0 1 9.300-.8A3.700 3.700 0 0 1 12.500 13z" fill="#0a5cb0" />
          <path d="M3.500 13a3.400 3.400 0 0 1 0-6.500l5 2L13 7.200A3 3 0 0 1 12.800 13z" fill="#1a8be0" />
          <path d="M2 12.500l6.500-4 6.800 2.700A3 3 0 0 1 12.800 13H3.500z" fill="#2caaf0" />
        </S>
        <div className="ml-[22px] flex w-[18px] flex-col items-center">
          <Fit w={17}>ITA</Fit>
          <Fit w={9}>IT</Fit>
        </div>
        <S size={17} box="0 0 17 17" className="ml-5">
          <path d="M11 1.500H3A1.500 1.500 0 0 0 1.500 3v8A1.500 1.500 0 0 0 3 12.500h10M6 12.500v3M10 12.500v3M4 15.500h8" stroke="#222" strokeWidth="1.100" />
          <path d="M12.500 1.500h3.500v4a1.700 1.700 0 0 1-3.500 0zM14.300 7v9" stroke="#222" strokeWidth="1.200" />
        </S>
        <S size={17} box="0 0 17 17" className="ml-[5px]">
          <path d="M1 6v5h3l4 3.500v-12L4 6z" stroke="#222" strokeWidth="1.200" strokeLinejoin="round" />
          <path d="M10 6.300c1 1.300 1 3 0 4.400" stroke="#222" strokeWidth="1.200" />
          <path d="M12 4.500c2 2.400 2 5.600 0 8M14 2.800c3 3.500 3 8 0 11.400" stroke="#a9b3b8" strokeWidth="1.100" />
        </S>
        <div className="ml-[18px] flex w-[62px] flex-col items-end">
          <Fit w={29}>16:24</Fit>
          <Fit w={62}>23/06/2025</Fit>
        </div>
      </div>
    </div>
  );
}

export default function App() {
  return (
    <div className="h-[1080px] w-[1920px] overflow-hidden font-['Open_Sans',sans-serif]">
      <TabStrip />
      <Toolbar />
      <BookmarkBar />
      <Page />
      <Taskbar />
    </div>
  );
}
